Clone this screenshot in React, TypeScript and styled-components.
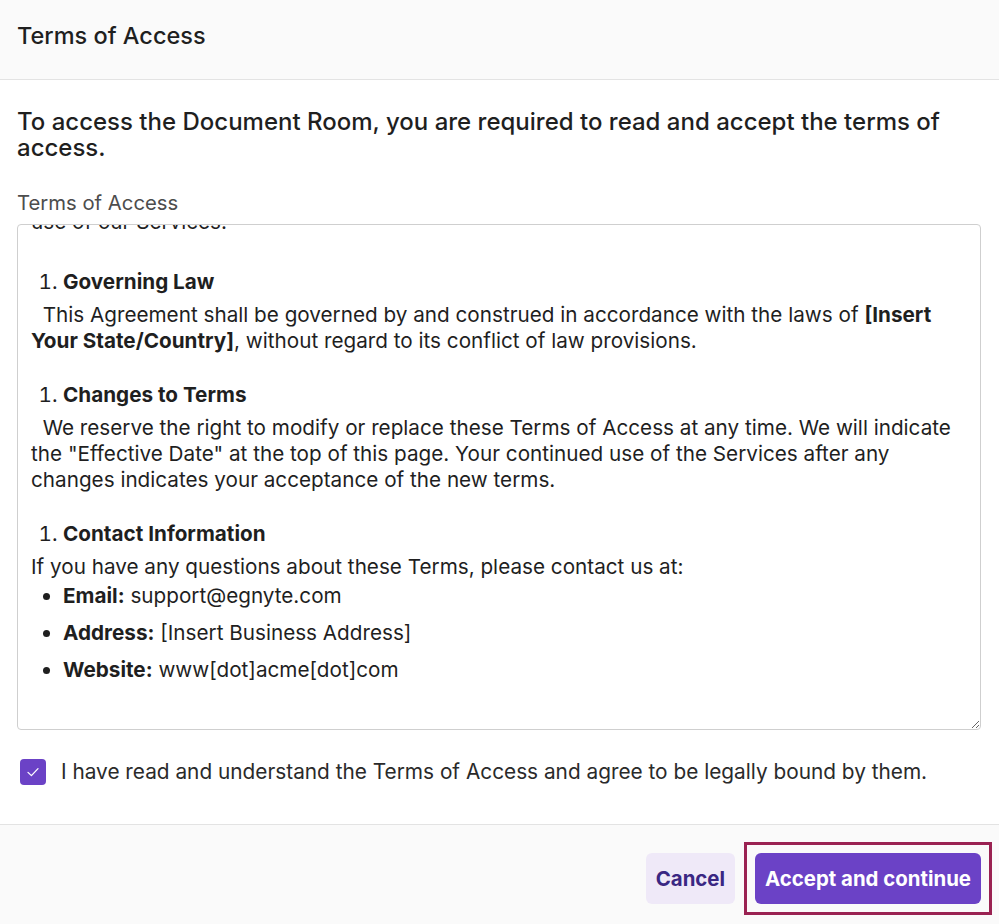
import React, { useEffect, useRef } from "react";
import styled, { createGlobalStyle } from "styled-components";

const Global = createGlobalStyle`
  html, body { margin: 0; padding: 0; background: #ffffff; }
  body { font-family: Inter, "Noto Sans", "Liberation Sans", sans-serif; color: #1f1f1f; }
  * { box-sizing: border-box; }
`;

const Dialog = styled.div`
  width: 999px;
  height: 924px;
  overflow: hidden;
  display: flex;
  flex-direction: column;
  background: #fff;
`;

const Header = styled.header`
  height: 80px;
  flex: none;
  background: #fafafa;
  border-bottom: 1px solid #e3e3e3;
  display: flex;
  align-items: center;
  padding: 0 17px 9px;
`;

const Title = styled.h1`
  margin: 0;
  font-size: 23.5px;
  font-weight: 500;
  color: #1f1f1f;
`;

const Body = styled.div`
  padding: 29px 18px 39px 17px;
  display: flex;
  flex-direction: column;
`;

const Lead = styled.h2`
  margin: 0 0 30px;
  font-size: 24px;
  line-height: 26px;
  font-weight: 500;
  color: #1f1f1f;
`;

const FieldLabel = styled.label`
  font-size: 20.3px;
  line-height: 24px;
  color: #4d4d4d;
  margin-bottom: 9px;
`;

const TermsBox = styled.div`
  height: 506px;
  border: 1px solid #cfcfcf;
  border-radius: 4px;
  overflow-y: auto;
  resize: vertical;
  padding: 0 13px 13px;
  font-size: 20.7px;
  line-height: 26px;
  color: #1f1f1f;
  scrollbar-width: none;
  &::-webkit-scrollbar { display: none; }
`;

const Para = styled.p`
  margin: 0;
`;

const SectionHead = styled.ol<{ $first?: boolean }>`
  margin: ${(p) => (p.$first ? "34px" : "28px")} 0 7px;
  padding-left: 32px;
  strong { font-weight: 700; }
`;

const Bullets = styled.ul`
  margin: 3px 0 33px;
  padding-left: 32px;
  li + li { margin-top: 11px; }
`;

const CheckRow = styled.div`
  display: flex;
  align-items: center;
  gap: 15px;
  margin-top: 29px;
  padding-left: 3px;
`;

const Box = styled.span`
  width: 26px;
  height: 26px;
  border-radius: 4px;
  background: #6b42c6;
  display: flex;
  align-items: center;
  justify-content: center;
  flex: none;
`;

const CheckText = styled.span`
  font-size: 20.8px;
  line-height: 26px;
  color: #2a2a2a;
`;

const Footer = styled.footer`
  flex: 1;
  background: #fafafa;
  border-top: 1px solid #e3e3e3;
  padding: 17px 7px 0;
`;

const Actions = styled.div`
  display: flex;
  justify-content: flex-end;
  align-items: center;
  gap: 9px;
`;

const FocusRing = styled.span`
  display: inline-flex;
  border: 3px solid #9a2252;
  padding: 8px;
`;

const Button = styled.button<{ $primary?: boolean }>`
  height: 51px;
  padding: 0 10px;
  border: none;
  border-radius: 6px;
  font-family: Inter, "Noto Sans", "Liberation Sans", sans-serif;
  font-size: 20.4px;
  font-weight: 700;
  background: ${(p) => (p.$primary ? "#6b42c6" : "#efe9f8")};
  color: ${(p) => (p.$primary ? "#ffffff" : "#3a2783")};
  outline: none;
  cursor: pointer;
`;

export default function App() {
  const ref = useRef<HTMLDivElement>(null);
  useEffect(() => {
    const el = ref.current;
    if (el) el.scrollTop = el.scrollHeight;
  }, []);
  return (
    <>
      <Global />
      <Dialog>
        <Header>
          <Title>Terms of Access</Title>
        </Header>
        <Body>
          <Lead>To access the Document Room, you are required to read and accept the terms of access.</Lead>
          <FieldLabel>Terms of Access</FieldLabel>
          <TermsBox ref={ref}>
            <Para>
              &nbsp;We may suspend or terminate your access to the Services at any time, without
              <br />
              prior notice, if we believe you have violated these Terms or engaged in conduct
              <br />
              use of our Services.
            </Para>
            <SectionHead $first>
              <li><strong>Governing Law</strong></li>
            </SectionHead>
            <Para>
              &nbsp;&nbsp;This Agreement shall be governed by and construed in accordance with the laws of <strong>[Insert Your State/Country]</strong>, without regard to its conflict of law provisions.
            </Para>
            <SectionHead>
              <li><strong>Changes to Terms</strong></li>
            </SectionHead>
            <Para>
              &nbsp;&nbsp;We reserve the right to modify or replace these Terms of Access at any time. We will indicate the "Effective Date" at the top of this page. Your continued use of the Services after any changes indicates your acceptance of the new terms.
            </Para>
            <SectionHead>
              <li><strong>Contact Information</strong></li>
            </SectionHead>
            <Para>If you have any questions about these Terms, please contact us at:</Para>
            <Bullets>
              <li><strong>Email:</strong> support@egnyte.com</li>
              <li><strong>Address:</strong> [Insert Business Address]</li>
              <li><strong>Website:</strong> www[dot]acme[dot]com</li>
            </Bullets>
          </TermsBox>
          <CheckRow>
            <Box>
              <svg width="16" height="16" viewBox="0 0 16 16" fill="none">
                <path d="M3 8.4 L6.4 11.6 L13 4.6" stroke="#fff" strokeWidth="1.3" strokeLinecap="round" strokeLinejoin="round" />
              </svg>
            </Box>
            <CheckText>I have read and understand the Terms of Access and agree to be legally bound by them.</CheckText>
          </CheckRow>
        </Body>
        <Footer>
          <Actions>
            <Button>Cancel</Button>
            <FocusRing>
              <Button $primary>Accept and continue</Button>
            </FocusRing>
          </Actions>
        </Footer>
      </Dialog>
    </>
  );
}
